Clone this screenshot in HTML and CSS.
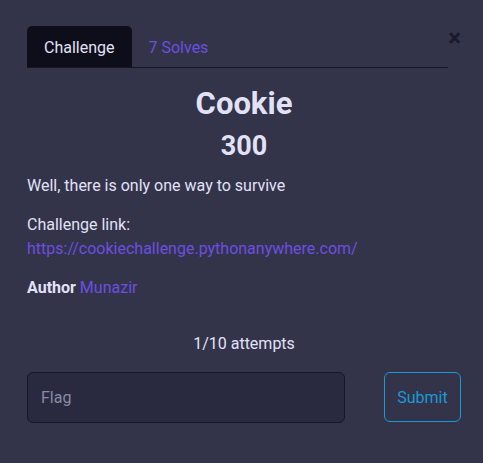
FILE: index.html
```html
<!DOCTYPE html>
<html>
<head>
<meta charset="utf-8">
<link rel="stylesheet" href="styles.css">
</head>
<body>
<div class="modal">
  <div class="head">
    <nav class="tabs">
      <span class="tab active">Challenge</span>
      <span class="tab">7 Solves</span>
    </nav>
    <span class="close">×</span>
  </div>
  <h2 class="title">Cookie</h2>
  <h3 class="value">300</h3>
  <p class="desc">Well, there is only one way to survive</p>
  <p class="desc desc-link">Challenge link:<br><a class="link" href="#">https://cookiechallenge.pythonanywhere.com/</a></p>
  <p class="author"><b>Author</b> <a class="link" href="#">Munazir</a></p>
  <p class="attempts">1/10 attempts</p>
  <div class="form">
    <input class="flag" placeholder="Flag">
    <button class="submit">Submit</button>
  </div>
</div>
</body>
</html>
```
FILE: styles.css
```css
html, body {
  margin: 0;
  padding: 0;
  background: #33334a;
  height: 100%;
}
body {
  font-family: Roboto, "Liberation Sans", sans-serif;
  color: #e2e2f6;
  font-size: 16px;
}
.modal {
  padding: 26px 22px 0 27px;
}
.head {
  display: flex;
  align-items: flex-start;
}
.tabs {
  display: flex;
  flex-shrink: 0;
  width: 421px;
  border-bottom: 1px solid #16162a;
}
.tab {
  padding: 2px 17px 0;
  height: 39px;
  line-height: 39px;
  color: #6d4fe0;
  border-radius: 5px 5px 0 0;
}
.tab.active {
  background: #0e0e1a;
  color: #e2e2f6;
}
.close {
  margin-left: auto;
  margin-top: 1px;
  font-size: 24px;
  font-weight: bold;
  line-height: 22px;
  color: #1a1a2c;
}
.title {
  text-align: center;
  font-size: 31px;
  font-weight: bold;
  margin: 19px 0 0;
  line-height: 34px;
}
.value {
  text-align: center;
  font-size: 27px;
  font-weight: bold;
  margin: 9px 0 0;
  line-height: 32px;
}
.desc {
  margin: 12px 0 0;
  line-height: 24px;
}
.desc-link {
  margin-top: 15px;
}
.author {
  margin: 15px 0 0;
  line-height: 24px;
}
.link {
  color: #6d4fe0;
  text-decoration: none;
}
.attempts {
  text-align: center;
  margin: 32px 0 0;
  line-height: 24px;
}
.form {
  display: flex;
  align-items: flex-start;
  margin-top: 16px;
  gap: 39px;
}
.flag {
  flex-shrink: 0;
  width: 318px;
  height: 51px;
  box-sizing: border-box;
  background: #292940;
  border: 1px solid #16162a;
  border-radius: 6px;
  padding: 0 13px;
  font-family: inherit;
  font-size: 16px;
  color: #e2e2f6;
  outline: none;
}
.flag::placeholder {
  color: #8a8aa6;
}
.submit {
  flex-shrink: 0;
  width: 77px;
  height: 50px;
  box-sizing: border-box;
  background: transparent;
  border: 1px solid #1a9ad6;
  border-radius: 6px;
  color: #1a9ad6;
  font-family: inherit;
  font-size: 16px;
  padding: 0;
}
```
